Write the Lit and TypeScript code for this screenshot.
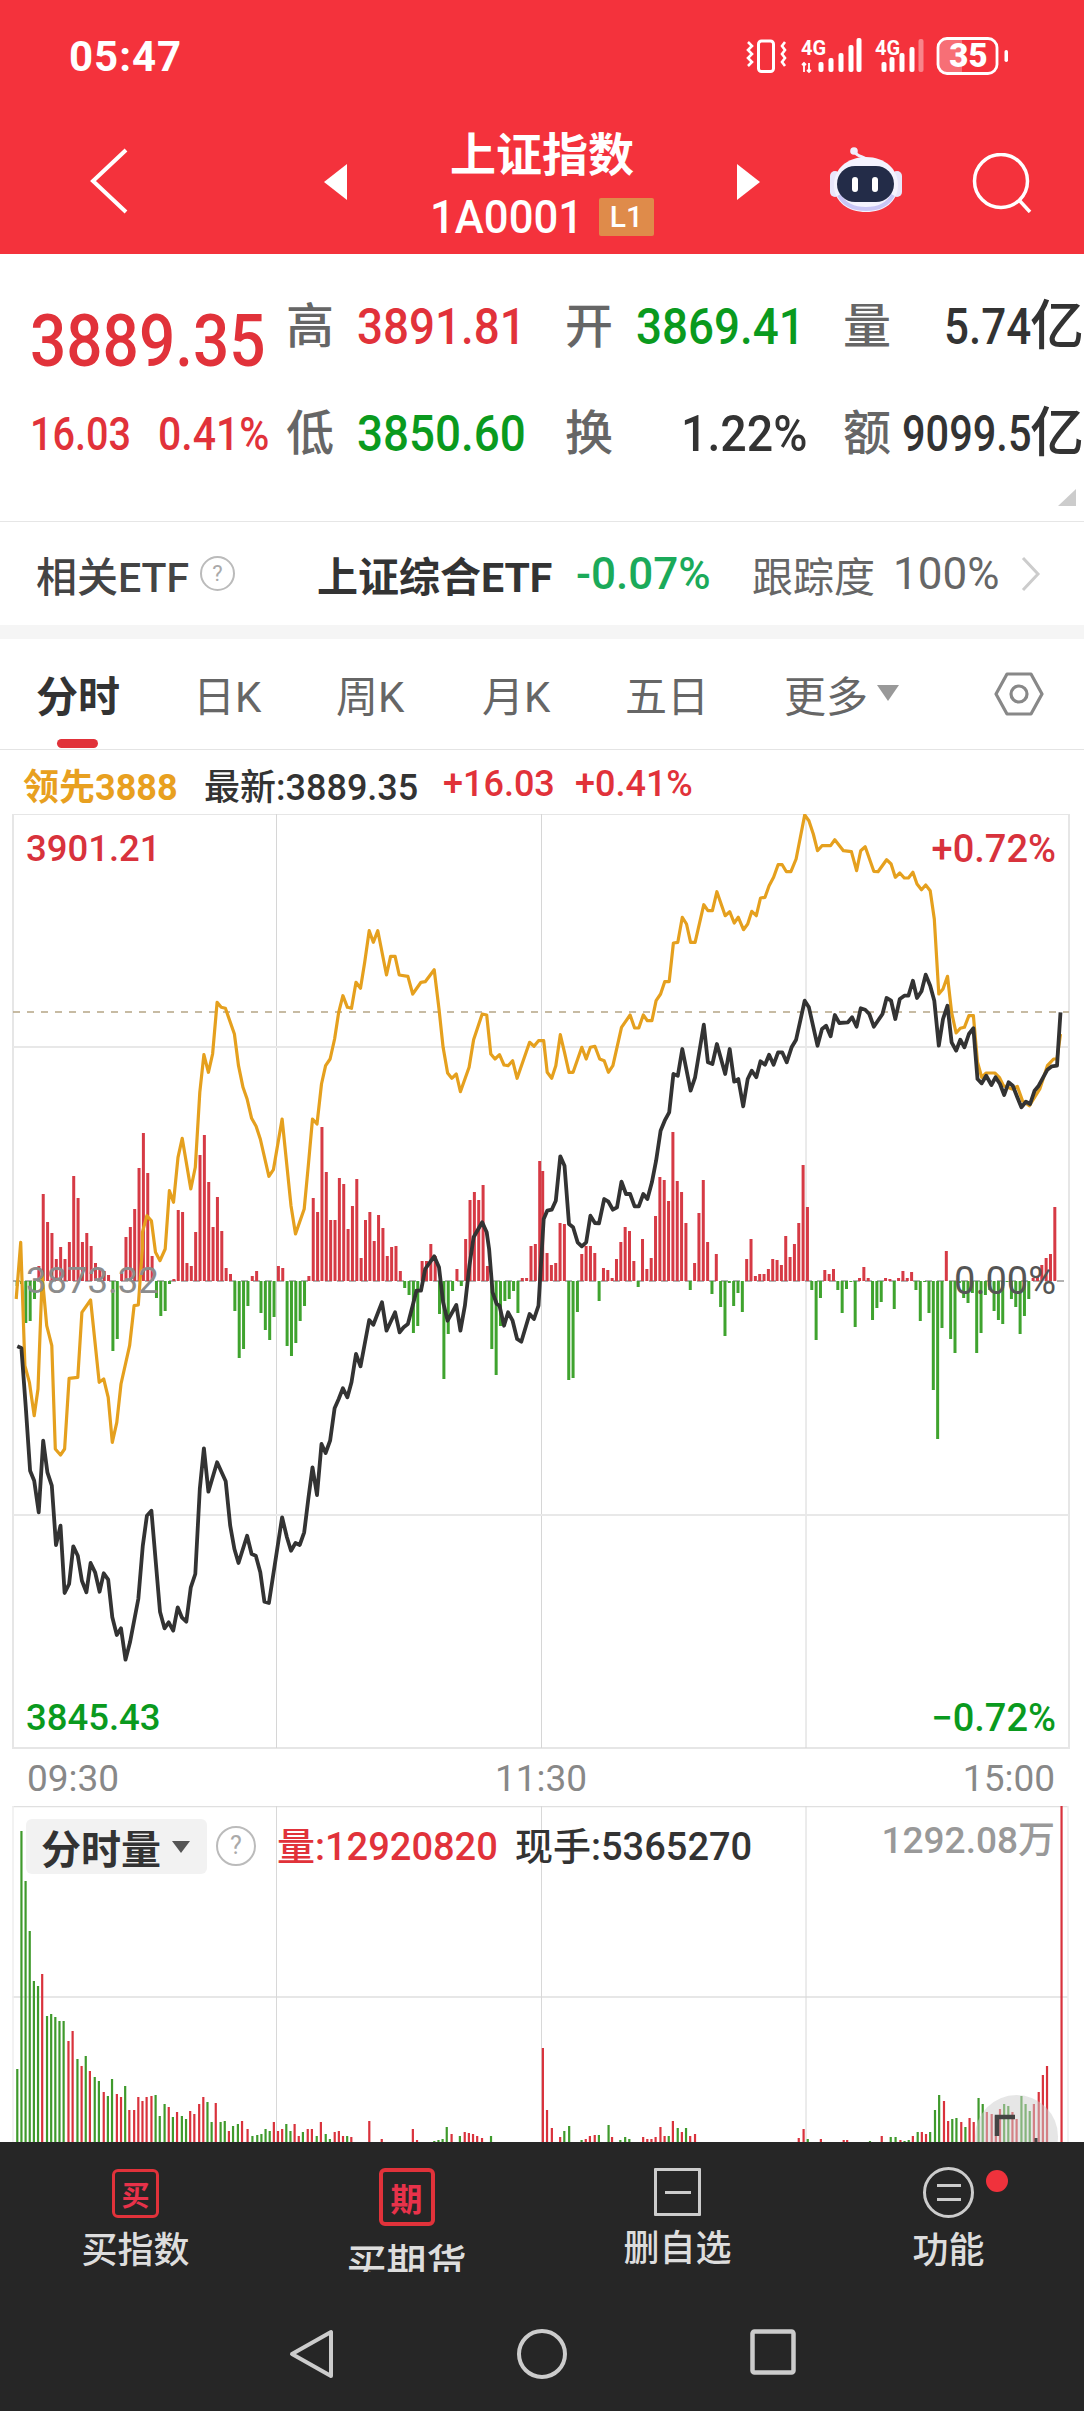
import { LitElement, html, css, svg } from "lit";
import { customElement } from "lit/decorators.js";

type P = [number, number];
const L5 = (a: P[]): P[] => a.map(([x, y]) => [x / 2.893, 1250 + y / 3]);
const L3 = (a: P[]): P[] => a.map(([x, y]) => [x / 2.893, 800 + y / 3]);
const R4 = (a: P[]): P[] => a.map(([x, y]) => [542 + x / 2.893, 800 + y / 3]);
const pts = (a: P[]) => a.map(([x, y]) => `${x.toFixed(1)},${y.toFixed(1)}`).join(" ");

const orange: P[] = [
  ...L5([[47,150],[60,-20],[72,350],[85,400],[99,500],[110,420],[122,80],[135,230],[150,290],[160,600],[175,618],[187,600],[200,388],[225,385],[237,190],[262,153],[287,400],[300,390],[313,445],[325,580],[338,520],[350,405],[375,290],[388,170],[400,168],[412,0],[412,-50],[425,-100],[438,-85],[450,10],[463,35],[478,0]]),
  ...L3([[490,1175],[502,1210],[515,1075],[527,1018],[552,1170],[565,1105],[578,880],[590,767],[603,820],[615,765],[628,610],[640,625],[652,628],[678,705],[690,800],[703,865],[715,900],[728,958],[741,982],[753,1020],[778,1132],[791,1112],[816,960],[842,1220],[855,1305],[880,1230],[892,1100],[904,960],[917,975],[930,855],[942,800],[955,780],[968,720],[980,640],[992,590],[1005,625],[1017,628],[1030,550],[1043,568],[1055,490],[1068,395],[1080,430],[1093,395],[1118,528],[1130,472],[1143,472],[1155,528],[1180,532],[1194,585],[1218,550],[1230,548],[1256,512],[1270,630],[1282,745],[1295,822],[1307,838],[1320,825],[1332,878],[1357,805],[1370,722],[1395,645],[1408,648],[1420,765],[1432,780],[1445,767],[1458,798],[1470,800],[1483,785],[1496,838],[1532,730],[1545,742],[1558,725]]),
  ...R4([[5,725],[15,820],[28,838],[40,800],[53,707],[65,760],[78,820],[90,820],[115,745],[128,780],[140,745],[153,742],[167,780],[180,785],[192,820],[205,800],[230,685],[255,648],[268,687],[280,687],[293,648],[305,665],[318,665],[330,605],[343,585],[355,548],[368,548],[380,432],[393,430],[406,355],[418,375],[430,430],[443,430],[468,317],[480,335],[493,335],[506,278],[530,350],[543,338],[556,372],[568,355],[583,392],[595,375],[607,337],[620,350],[632,297],[645,295],[657,260],[670,235],[683,197],[695,197],[707,218],[720,218],[735,180],[760,48],[772,65],[785,105],[797,155],[810,140],[835,140],[847,122],[872,155],[895,158],[910,215],[922,155],[935,143],[960,217],[972,218],[997,182],[1010,195],[1022,235],[1035,222],[1048,237],[1060,237],[1073,220],[1085,255],[1098,272],[1110,258],[1123,275],[1135,360],[1148,585],[1160,570],[1173,532],[1185,640],[1198,702],[1210,688],[1222,685],[1235,650],[1248,650],[1260,790],[1272,835],[1285,822],[1310,822],[1323,835],[1335,860],[1360,870],[1375,862],[1390,905],[1410,920],[1440,870],[1462,800],[1480,780],[1490,780],[1500,705]]),
];

const black: P[] = [
  ...L5([[50,292],[62,297],[75,480],[87,665],[99,695],[112,790],[125,575],[137,670],[150,710],[162,888],[175,830],[187,1032],[200,1005],[212,892],[225,920],[237,995],[250,1030],[262,942],[275,970],[288,1028],[300,973],[313,992],[325,1105],[338,1158],[350,1138],[363,1232],[376,1180],[400,1050],[413,890],[425,800],[438,785],[463,1088],[476,1138],[488,1120],[501,1145],[514,1075],[526,1105],[539,1118],[552,1015],[565,975],[578,720],[590,598],[603,728],[628,640],[653,697],[666,830],[678,900],[690,942],[715,860],[728,915],[740,920],[753,970],[765,1058],[778,1062],[816,805],[830,865],[842,905],[855,882],[867,888],[880,850],[892,750],[904,655],[917,738],[930,585],[942,612],[955,575],[968,478],[980,450],[992,418],[1005,445],[1017,400],[1030,315],[1043,352],[1055,285],[1068,213],[1080,227],[1105,160],[1118,245],[1143,190],[1156,250],[1168,235],[1180,225],[1205,125],[1218,125],[1230,60],[1256,22],[1270,55],[1282,160],[1295,215],[1320,168],[1332,245],[1345,170],[1358,50],[1370,-35],[1395,-80],[1408,-50],[1415,0],[1425,130],[1437,165],[1445,170],[1458,230],[1470,190],[1483,215],[1496,270],[1508,278],[1532,195],[1545,210],[1558,170]]),
  ...R4([[5,1260],[15,1235],[28,1232],[40,1205],[53,1072],[65,1100],[78,1275],[90,1285],[103,1330],[115,1342],[128,1330],[140,1250],[153,1272],[165,1273],[180,1200],[192,1208],[205,1232],[217,1225],[230,1148],[243,1185],[255,1185],[268,1222],[280,1222],[293,1185],[305,1200],[318,1150],[330,1085],[343,995],[355,965],[368,940],[380,825],[393,830],[406,750],[430,875],[443,835],[468,677],[480,790],[493,795],[506,735],[530,825],[543,750],[556,848],[568,840],[582,922],[595,840],[607,815],[620,835],[632,787],[645,797],[657,767],[670,797],[683,760],[695,760],[708,790],[722,745],[735,722],[760,605],[772,625],[797,740],[810,690],[822,680],[835,712],[847,648],[860,672],[885,670],[897,655],[910,683],[922,628],[935,632],[947,645],[960,683],[985,645],[997,597],[1010,605],[1022,660],[1035,600],[1048,590],[1060,590],[1073,545],[1085,597],[1098,577],[1110,527],[1123,560],[1135,605],[1148,740],[1160,660],[1173,620],[1185,730],[1198,755],[1210,722],[1222,745],[1235,705],[1248,688],[1260,840],[1272,853],[1285,830],[1300,858],[1312,835],[1325,855],[1337,888],[1350,850],[1362,860],[1375,895],[1387,925],[1400,908],[1412,915],[1425,875],[1437,860],[1462,812],[1475,802],[1490,800],[1500,640]]),
];

const barsL = [-5,-3,-42,-40,-18,15,87,59,48,22,34,22,39,105,83,39,48,35,18,12,10,6,-70,-58,8,44,54,72,113,148,108,25,-17,-35,-30,-3,2,71,69,18,15,49,126,146,99,54,84,50,13,7,-30,-77,-68,-25,5,10,-32,-49,-59,-36,15,13,-65,-75,-62,-40,-25,5,83,69,154,109,61,61,103,97,52,75,102,23,61,69,40,66,53,25,34,35,10,-7,-14,-52,-45,20,20,37,25,-33,-98,-53,-10,12,-5,42,81,89,81,96,15,-68,-94,-45,-20,-18,-10,-32,3,3,35,37,120];
const barsR = [110,28,16,18,58,57,-99,-97,-31,27,35,35,28,-20,13,11,3,22,39,54,50,20,-6,42,12,23,65,104,101,80,149,100,89,58,-9,18,68,101,39,-13,27,-26,-55,-2,-25,-12,-31,22,42,5,7,7,12,22,21,16,45,24,37,58,116,74,-9,-59,-17,11,7,12,-9,-32,-8,-1,-46,3,14,3,-39,-27,-21,3,2,-28,3,10,3,9,-9,-40,-1,-32,-109,-158,-47,30,-58,-72,-2,-17,-22,-12,-72,-52,-14,-9,-30,-39,-43,-1,-18,-26,-53,-35,-18,3,5,16,23,27,74];
const allBars: P[] = [
  ...barsL.map((v, i): P => [17.1 + 4.355 * i, v]),
  ...barsR.map((v, i): P => [542.7 + 4.34 * i, v]),
];

const vol: P[] = [[25,-73],[31,-311],[37,-261],[43,-211],[49,-161],[55,-156],[61,168],[68,-126],[74,-128],[80,-125],[86,-121],[92,-121],[99,101],[105,111],[112,-83],[118,76],[124,-86],[130,71],[137,-65],[143,-61],[150,50],[156,-46],[162,-63],[169,48],[175,45],[181,-56],[187,32],[194,32],[200,45],[206,41],[212,45],[219,46],[225,-47],[231,-26],[238,-38],[244,35],[250,-25],[256,30],[263,-26],[269,-23],[275,31],[281,28],[288,38],[294,45],[300,-40],[306,-20],[312,39],[319,-20],[325,-21],[331,11],[337,-16],[344,-18],[350,21],[358,13],[365,-6],[372,-7],[378,-8],[384,-13],[390,-11],[396,20],[402,11],[408,13],[414,-18],[420,-11],[426,18],[432,6],[438,-10],[445,13],[451,13],[458,-6],[464,20],[471,-8],[477,-3],[484,10],[490,11],[496,6],[502,-6],[508,5],[534,21],[552,3],[597,13],[603,2],[628,-1],[634,-2],[640,-3],[646,-15],[653,8],[665,-6],[672,10],[678,9],[684,8],[690,6],[697,4],[710,-6],[785,94],[791,32],[798,14],[810,5],[816,-11],[823,-16],[841,-2],[847,3],[853,6],[860,7],[866,-7],[880,-17],[885,5],[897,-2],[904,-5],[910,-3],[930,5],[936,3],[942,3],[948,5],[955,15],[961,6],[967,-6],[973,21],[980,-14],[986,10],[992,-14],[998,6],[1005,8],[1155,4],[1162,13],[1168,-3],[1187,3],[1220,2],[1225,2],[1258,-1],[1275,6],[1288,-5],[1295,-5],[1302,2],[1308,-1],[1314,-2],[1320,6],[1327,-10],[1333,10],[1339,8],[1345,-10],[1352,-32],[1358,-47],[1365,41],[1371,21],[1377,-23],[1383,-24],[1390,20],[1396,-15],[1402,24],[1408,20],[1415,-44],[1421,-38],[1427,30],[1434,28],[1440,26],[1446,33],[1452,-38],[1458,-36],[1464,30],[1470,23],[1477,-46],[1483,-38],[1489,-31],[1495,38],[1502,50],[1508,67],[1514,76],[1535,337]];

@customElement("app-root")
export class AppRoot extends LitElement {
  static styles = css`
    :host { display: block; width: 1084px; height: 2412px; overflow: hidden; background: #fff;
      font-family: Roboto, "Noto Sans CJK SC", sans-serif; color: #333; }
    .n { display: inline-block; transform-origin: left center; transform: scaleX(.91); white-space: nowrap; }

    .head { height: 254px; background: #f4323c; color: #fff; }
    .status { height: 112px; display: flex; justify-content: space-between; align-items: flex-start; }
    .time { font-size: 42px; font-weight: 700; line-height: 46px; margin: 34px 0 0 69px; letter-spacing: 1px; }
    .sicons { display: block; margin: 30px 70px 0 0; }
    .bar { display: grid; grid-template-columns: 90px 36px 198px 23px 390px 23px 70px 71px 71px 58px; height: 142px; }
    .bar svg { display: block; }
    .back { margin-top: 36px; }
    .tri { margin-top: 52px; }
    .robot { margin-top: 35px; grid-column: 8; }
    .search { margin-top: 41px; grid-column: 10; }
    .mid { display: flex; flex-direction: column; align-items: center; padding-top: 16px; }
    .title { font-size: 46px; line-height: 54px; font-weight: 700; }
    .code { display: flex; align-items: center; height: 46px; margin-top: 12px; font-size: 46px; font-weight: 500; }
    .cnum { width: 152px; transform: scaleX(.95); }
    .l1 { width: 55px; height: 38px; margin-left: 17px; border-radius: 2px; background: #df8b4a; color: #fff; font-size: 30px; font-weight: 500; line-height: 38px; text-align: center; }

    .quote { position: relative; height: 268px; box-sizing: border-box; border-bottom: 1px solid #e6e6e6; padding: 46px 0 0 30px;
      display: grid; grid-template-columns: 257px 70px 209px 70px 208px 70px 170px; grid-template-rows: 54px 54px; row-gap: 53px; }
    .q { line-height: 54px; white-space: nowrap; }
    .lab { font-size: 48px; color: #666; font-weight: 500; margin-left: -1px; }
    .val { font-size: 50px; font-weight: 500; }
    .val .n { transform: scaleX(.915); }
    .red { color: #e1323a; } .grn { color: #0a9a1e; }
    .price { font-size: 73px; font-weight: 500; margin-top: 14px; transform: scaleX(.875); }
    .chg { display: flex; font-size: 46px; font-weight: 500; }
    .chg .n { transform: scaleX(.89); }
    .chg .w128 { width: 128px; transform: scaleX(.86); }
    .last { display: flex; justify-content: flex-end; font-size: 50px; font-weight: 500; }
    .yi { font-size: 54px; font-weight: 500; }
    .last .w84 { width: 86px; transform: scaleX(.88); }
    .val .w124 { width: 124px; margin-left: 45px; transform: scaleX(.93); }
    .last .w128b { width: 128px; transform: scaleX(.83); }
    .corner { position: absolute; right: 8px; bottom: 15px; width: 0; height: 0; border-left: 18px solid transparent; border-bottom: 17px solid #ccc; }

    .etf { height: 103px; display: flex; align-items: center; padding-left: 36px; font-size: 41px; white-space: nowrap; }
    .etf .a { width: 164px; color: #444; font-weight: 500; }
    .qm { width: 31px; height: 31px; border: 2px solid #bbb; border-radius: 50%; color: #aaa; font-size: 22px; line-height: 31px; text-align: center; flex: none; }
    .etf .b { margin-left: 82px; width: 259px; font-size: 41px; font-weight: 700; color: #333; }
    .etf .c { width: 176px; color: #1baa5a; font-size: 44px; font-weight: 500; }
    .etf .d { width: 141px; color: #666; }
    .etf .e { width: 127px; color: #666; font-size: 44px; }
    .band { height: 14px; background: #f5f5f5; }

    .tabs { position: relative; height: 110px; border-bottom: 1px solid #e4e4e4; box-sizing: content-box; display: grid;
      grid-template-columns: 36px 157px 143px 146px 143px 159px 91px 209px; align-items: center; font-size: 42px; color: #666; white-space: nowrap; }
    .tabs > span { margin-top: -2px; }
    .tabs .on { grid-column: 2; font-weight: 700; color: #333; }
    .tabs .more { display: flex; align-items: center; grid-column: 7; width: 120px; }
    .mtri { width: 0; height: 0; margin-left: 9px; border-left: 11px solid transparent; border-right: 11px solid transparent; border-top: 16px solid #999; }
    .hex { grid-column: 8; margin-left: 119px; display: block; }
    .ul { position: absolute; left: 57px; top: 100px; width: 41px; height: 9px; border-radius: 5px; background: #e1323a; }

    .legend { height: 64px; display: flex; align-items: center; font-size: 36px; white-space: nowrap; padding: 4px 0 0 23px; box-sizing: border-box; }
    .leg1 { width: 181px; font-weight: 700; color: #e8a020; }
    .leg2 { width: 239px; font-weight: 500; color: #333; }
    .leg3 { width: 132px; color: #e1323a; font-weight: 500; }
    .leg4 { color: #e1323a; font-weight: 500; }

    .chart { position: relative; height: 935px; }
    .chart svg, .vol .grid { position: absolute; left: 0; top: 0; display: block; }
    .t { position: absolute; font-size: 38px; line-height: 42px; white-space: nowrap; font-weight: 500; }
    .tl { left: 26px; font-size: 36.5px; } .tr { right: 28px; }
    .top { top: 14px; color: #d8323c; }
    .mida { top: 446px; color: #8c8c8c; font-weight: 400; }
    .midb { top: 446px; color: #555; font-weight: 400; }
    .bot { top: 883px; color: #0a9a1e; }

    .axis { height: 57px; display: flex; justify-content: space-between; align-items: center; padding: 2px 29px 0 27px; box-sizing: border-box; font-size: 37px; color: #888; }

    .vol { position: relative; height: 336px; overflow: hidden; }
    .chip { position: absolute; left: 26px; top: 13px; width: 181px; height: 55px; border-radius: 6px; background: #f2f2f2; display: flex; align-items: center; padding-left: 15px; box-sizing: border-box; font-size: 40px; font-weight: 700; color: #333; }
    .ctri { width: 0; height: 0; margin-left: 11px; border-left: 9px solid transparent; border-right: 9px solid transparent; border-top: 12px solid #555; }
    .qm2 { position: absolute; left: 216px; top: 20px; width: 36px; height: 36px; line-height: 36px; font-size: 25px; }
    .vl { position: absolute; top: 19px; line-height: 44px; font-size: 38px; white-space: nowrap; font-weight: 500; }
    .vl1 { left: 277px; color: #e1323a; }
    .vl2 { left: 515px; color: #333; }
    .vl3 { right: 29px; top: 13px; color: #999; font-size: 37px; }
    .float { position: absolute; left: 975px; top: 289px; width: 83px; height: 83px; border-radius: 50%; background: rgba(205,205,205,.5); }
    .fic { position: absolute; left: 975px; top: 289px; display: block; }

    .foot { height: 269px; background: #262626; }
    .tabsb { height: 130px; overflow: hidden; display: grid; grid-template-columns: repeat(4, 271px); }
    .it { display: flex; flex-direction: column; align-items: center; position: relative; padding-top: 27px; color: #ddd; font-size: 36px; font-weight: 500; }
    .it .lb { line-height: 40px; margin-top: 13px; white-space: nowrap; }
    .it .lb2 { font-size: 40px; line-height: 46px; margin-top: 16px; white-space: nowrap; }
    .ic { box-sizing: border-box; width: 47px; height: 49px; border: 3px solid #e1323a; border-radius: 6px; color: #e8324a; font-size: 28px; font-weight: 700; display: flex; align-items: center; justify-content: center; }
    .ic2 { width: 56px; height: 58px; border-width: 4px; font-size: 32px; margin-top: -1px; }
    .ic3 { border: 3px solid #ccc; border-radius: 1px; height: 48px; margin-top: -1px; }
    .ic3::after { content: ""; width: 26px; height: 3px; background: #ccc; }
    .ic4 { flex-direction: column; gap: 11px; border: 3px solid #ccc; border-radius: 50%; width: 51px; height: 51px; margin-top: -2px; }
    .ic4 i { display: block; width: 24px; height: 3px; background: #ccc; }
    .dot { position: absolute; left: 173px; top: 28px; width: 22px; height: 22px; border-radius: 50%; background: #f0323c; }
    .sys { display: flex; padding: 57px 0 0 289px; gap: 183px; }
    .sys svg { display: block; }
  `;

  render() {
    return html`
      <div class="head">
        <div class="status">
          <div class="time">05:47</div>
          <svg class="sicons" width="270" height="50" viewBox="745 30 270 50" fill="none">
            <rect x="759.5" y="41" width="15" height="30.5" rx="3" stroke="#fff" stroke-width="3"/>
            <path d="M749 42l4 4-4 4 4 4-4 4 4 4-4 4M786 42l-3 4 3 4-3 4 3 4-3 4 3 4" stroke="#fff" stroke-width="2.6"/>
            <text x="802" y="55" font-size="20" font-weight="700" fill="#fff" font-family="Roboto">4G</text>
            <path d="M805 72v-9M803 65l2-2 2 2M810 63v9M808 70l2 2 2-2" stroke="#fff" stroke-width="1.8"/>
            ${[[822,62],[832,58],[842,53],[852,45],[860,38]].map(([x, y]) => svg`<rect x=${x - 2.5} y=${y} width="5" height=${72 - y} rx="2" fill="#fff"/>`)}
            <text x="876" y="55" font-size="20" font-weight="700" fill="#fff" font-family="Roboto">4G</text>
            ${[[885,62],[893,57],[903,53],[913,47]].map(([x, y]) => svg`<rect x=${x - 2.5} y=${y} width="5" height=${72 - y} rx="2" fill="#fff"/>`)}
            <rect x="919.5" y="39" width="5" height="33" rx="2" fill="#fff" fill-opacity=".4"/>
            <path d="M963 38.5h-16a8 8 0 0 0-8 8v19a8 8 0 0 0 8 8h16z" fill="#fff" fill-opacity=".3"/>
            <rect x="939" y="38.5" width="59" height="35" rx="9" stroke="#fff" stroke-width="2.8"/>
            <text x="969.5" y="67" font-size="33" font-weight="900" fill="#fff" text-anchor="middle" font-family="Roboto">35</text>
            <rect x="1005.5" y="50" width="3.5" height="12" rx="1.7" fill="#fff"/>
          </svg>
        </div>
        <div class="bar">
          <span></span>
          <svg class="back" width="38" height="66" viewBox="0 0 38 66" fill="none"><path d="M36 2L3 33l33 31" stroke="#fff" stroke-width="4"/></svg>
          <span></span>
          <svg class="tri" width="23" height="36" viewBox="0 0 23 36"><path d="M23 0v36L0 18z" fill="#fff"/></svg>
          <div class="mid">
            <div class="title">上证指数</div>
            <div class="code"><span class="n cnum">1A0001</span><span class="l1">L1</span></div>
          </div>
          <svg class="tri" width="23" height="36" viewBox="0 0 23 36"><path d="M0 0v36l23-18z" fill="#fff"/></svg>
          <svg class="robot" width="72" height="66" viewBox="0 0 72 66" fill="none">
            <path d="M25 5c2 5 9 4 11 7" stroke="#f0eefc" stroke-width="3"/><circle cx="24" cy="4" r="3.8" fill="#f0eefc"/>
            <rect x="0" y="24" width="10" height="26" rx="5" fill="#e8e6fa"/><rect x="62" y="24" width="10" height="26" rx="5" fill="#e8e6fa"/>
            <path d="M36 10c19 0 32 12 32 28 0 17-14 27-32 27S4 55 4 38C4 22 17 10 36 10z" fill="#f4f3fe"/>
            <path d="M9 48c6 11 16 14 27 14s21-3 27-14" stroke="#c9c6f6" stroke-width="4"/>
            <rect x="7" y="19" width="57" height="36" rx="18" fill="#232c48"/>
            <rect x="22" y="30" width="6" height="15" rx="3" fill="#fff"/><rect x="42" y="30" width="6" height="15" rx="3" fill="#fff"/>
          </svg>
          <svg class="search" width="60" height="60" viewBox="0 0 60 60" fill="none"><circle cx="29" cy="28" r="26.5" stroke="#fff" stroke-width="3.5"/><path d="M47 47l11 12" stroke="#fff" stroke-width="3.5"/></svg>
        </div>
      </div>

      <div class="quote">
        <div class="q"><span class="n price red">3889.35</span></div>
        <div class="q lab">高</div><div class="q val"><span class="n red">3891.81</span></div>
        <div class="q lab">开</div><div class="q val"><span class="n grn">3869.41</span></div>
        <div class="q lab">量</div><div class="q last"><span class="n w84">5.74</span><span class="yi">亿</span></div>
        <div class="q chg red"><span class="n w128">16.03</span><span class="n">0.41%</span></div>
        <div class="q lab">低</div><div class="q val"><span class="n grn">3850.60</span></div>
        <div class="q lab">换</div><div class="q val"><span class="n w124">1.22%</span></div>
        <div class="q lab">额</div><div class="q last"><span class="n w128b">9099.5</span><span class="yi">亿</span></div>
        <div class="corner"></div>
      </div>

      <div class="etf">
        <span class="a">相关ETF</span><span class="qm">?</span>
        <span class="b">上证综合ETF</span><span class="c">-0.07%</span><span class="d">跟踪度</span><span class="e">100%</span>
        <svg width="22" height="36" viewBox="0 0 22 36" fill="none"><path d="M3 2l15 16L3 34" stroke="#ccc" stroke-width="3"/></svg>
      </div>
      <div class="band"></div>

      <div class="tabs">
        <span class="on">分时</span><span>日K</span><span>周K</span><span>月K</span><span>五日</span>
        <span class="more">更多<i class="mtri"></i></span>
        <svg class="hex" width="50" height="46" viewBox="0 0 50 46" fill="none">
          <path d="M13 3h24l11 20-11 20H13L2 23z" stroke="#888" stroke-width="3.2" stroke-linejoin="round"/>
          <circle cx="25" cy="23" r="8" stroke="#888" stroke-width="3.2"/>
        </svg>
        <div class="ul"></div>
      </div>

      <div class="legend">
        <span class="leg1">领先3888</span>
        <span class="leg2">最新:3889.35</span>
        <span class="leg3">+16.03</span>
        <span class="leg4">+0.41%</span>
      </div>

      <div class="chart">
        <svg width="1084" height="935" viewBox="0 815 1084 935" fill="none">
          <rect x="13" y="815" width="1056" height="934" stroke="#e6e6e6" stroke-width="2"/>
          <path d="M276.5 815v934M541.5 815v934M806 815v934" stroke="#d6d6d6" stroke-width="1"/>
          <path d="M13 1048h1056M13 1516h1056" stroke="#e8e8e8" stroke-width="2"/>
          <path d="M13 1013h1056" stroke="#b5a585" stroke-width="1.5" stroke-dasharray="7 7"/>
          <path d="M13 1282h1056" stroke="#999" stroke-width="1.5" stroke-dasharray="7 5"/>
          ${allBars.map(([x, v]) => svg`<rect x=${x - 1.5} y=${v > 0 ? 1282 - v : 1282} width="3" height=${Math.abs(v)} fill=${v > 0 ? "#d63a45" : "#3fa32e"}/>`)}
          <polyline points=${pts(orange)} stroke="#e5a01e" stroke-width="3.2" stroke-linejoin="round"/>
          <polyline points=${pts(black)} stroke="#333" stroke-width="3.8" stroke-linejoin="round"/>
        </svg>
        <div class="t tl top">3901.21</div><div class="t tr top">+0.72%</div>
        <div class="t tl mida">3873.32</div><div class="t tr midb">0.00%</div>
        <div class="t tl bot">3845.43</div><div class="t tr bot">−0.72%</div>
      </div>

      <div class="axis"><span>09:30</span><span>11:30</span><span>15:00</span></div>

      <div class="vol">
        <svg class="grid" width="1084" height="336" viewBox="0 1807 1084 336" fill="none">
          <path d="M12.5 1807.5H1068M12.5 1998H1068" stroke="#e0e0e0" stroke-width="1.5"/>
          <path d="M13 1807v336M1068 1807v336" stroke="#eee" stroke-width="1.5"/>
          <path d="M276.5 1807v336M541.5 1807v336M806 1807v336" stroke="#d8d8d8" stroke-width="1"/>
          ${vol.map(([x, v]) => svg`<rect x=${x / 1.446 - 1.1} y=${2143 - Math.abs(v)} width="2.2" height=${Math.abs(v)} fill=${v > 0 ? "#d9323c" : "#3f9a2c"}/>`)}
        </svg>
        <div class="chip">分时量<i class="ctri"></i></div>
        <div class="qm qm2">?</div>
        <div class="vl vl1">量:12920820</div>
        <div class="vl vl2">现手:5365270</div>
        <div class="vl vl3">1292.08万</div>
        <div class="float"></div>
        <svg class="fic" width="83" height="50" viewBox="0 0 83 50" fill="none"><path d="M22 41V22h18" stroke="#444" stroke-width="4.5"/><path d="M61 43v6" stroke="#444" stroke-width="3"/></svg>
      </div>

      <div class="foot">
        <div class="tabsb">
          <div class="it"><div class="ic">买</div><div class="lb">买指数</div></div>
          <div class="it"><div class="ic ic2">期</div><div class="lb2">买期货</div></div>
          <div class="it"><div class="ic ic3"></div><div class="lb">删自选</div></div>
          <div class="it"><div class="ic ic4"><i></i><i></i></div><div class="lb">功能</div><div class="dot"></div></div>
        </div>
        <div class="sys">
          <svg width="45" height="50" viewBox="0 0 45 50" fill="none"><path d="M42 3v44L3 25z" stroke="#ccc" stroke-width="4" stroke-linejoin="round"/></svg>
          <svg width="50" height="50" viewBox="0 0 50 50" fill="none"><circle cx="25" cy="25" r="23" stroke="#ccc" stroke-width="4"/></svg>
          <svg width="46" height="46" viewBox="0 0 46 46" fill="none"><rect x="2.5" y="2.5" width="41" height="41" rx="2" stroke="#ccc" stroke-width="4.5"/></svg>
        </div>
      </div>
    `;
  }
}
